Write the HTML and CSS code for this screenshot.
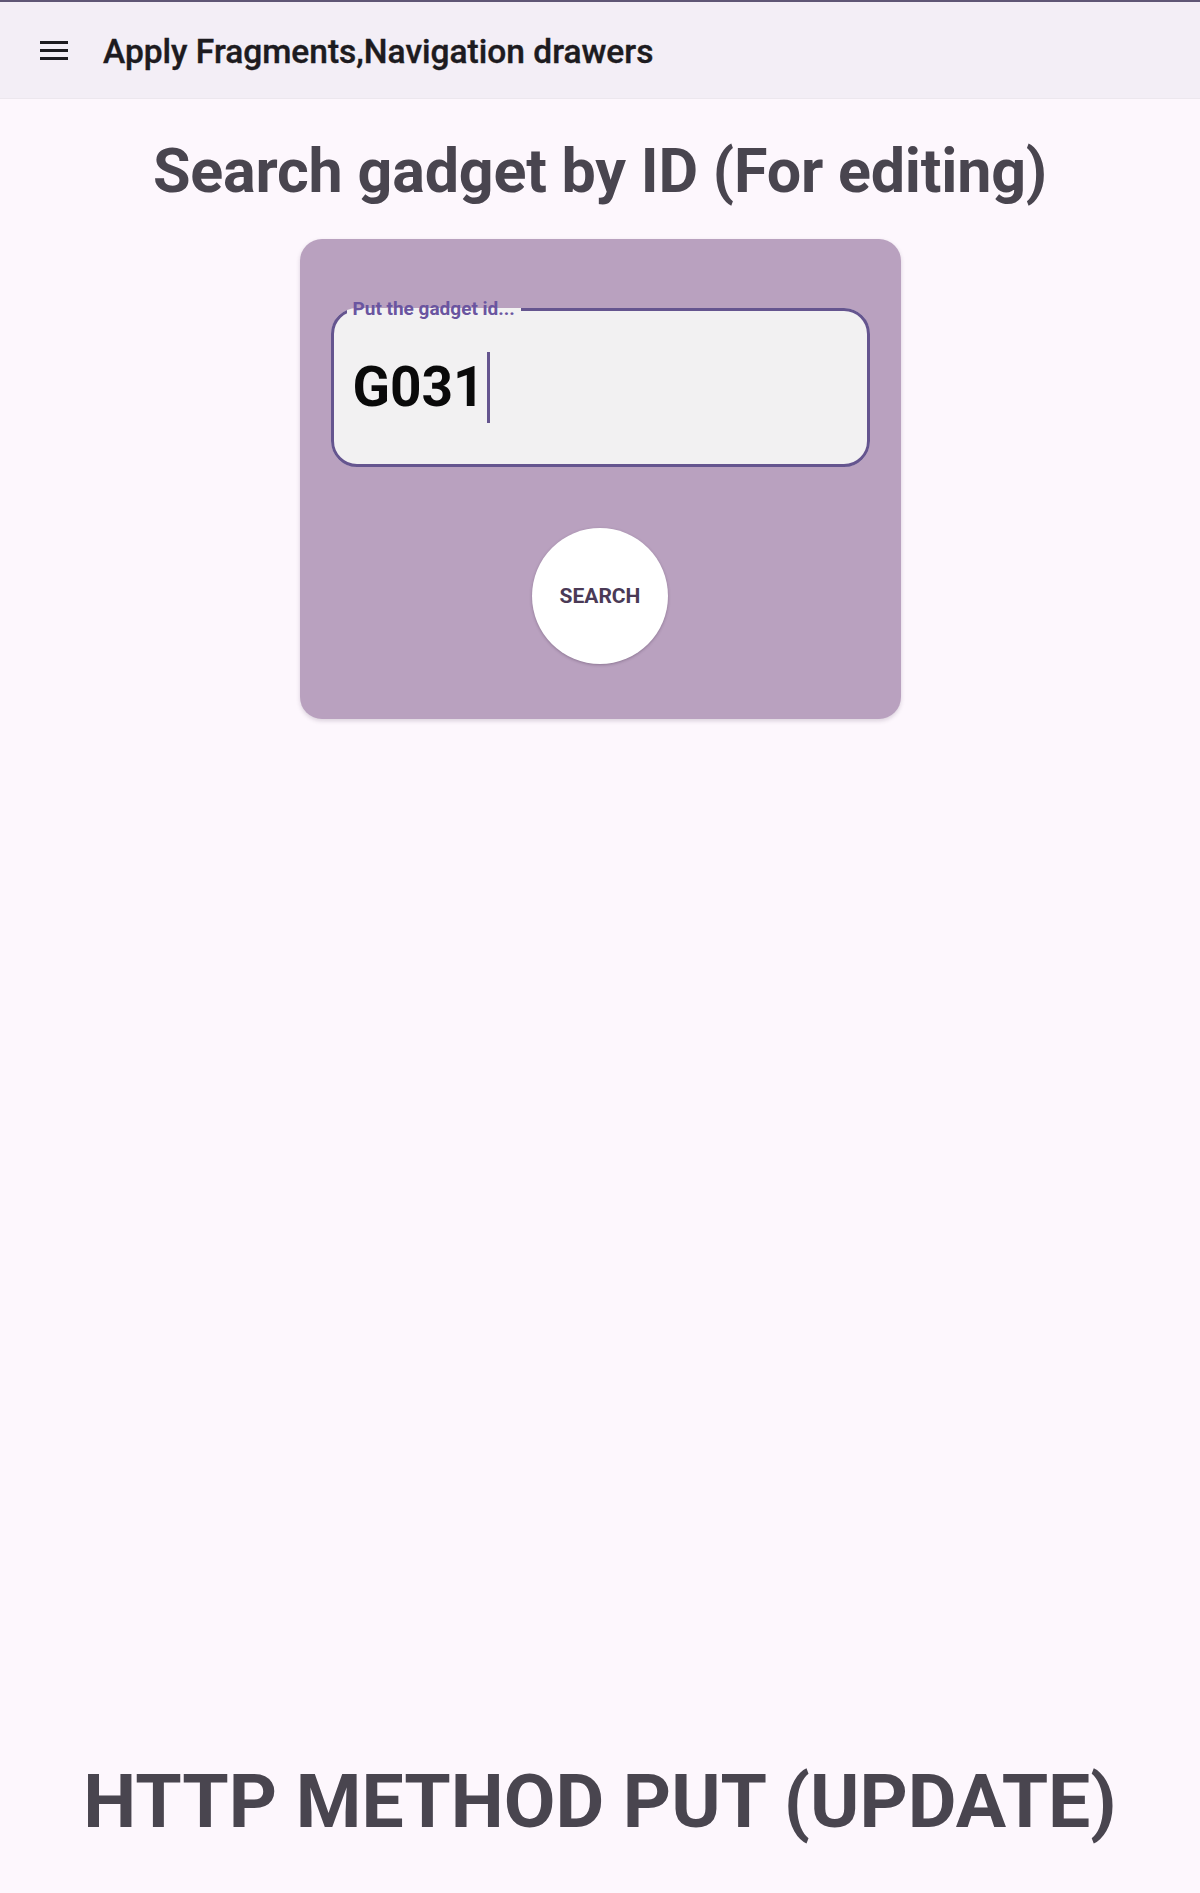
FILE: index.html
```html
<!DOCTYPE html>
<html lang="en">
<head>
<meta charset="utf-8">
<title>Apply Fragments,Navigation drawers</title>
<link rel="stylesheet" href="styles.css">
</head>
<body>
<header class="appbar">
  <span class="menu-icon" aria-label="Menu"><span></span><span></span><span></span></span>
  <h1 class="appbar-title">Apply Fragments,Navigation drawers</h1>
</header>
<main class="content">
  <h2 class="page-title">Search gadget by ID (For editing)</h2>
  <section class="card">
    <fieldset class="field">
      <legend class="field-label">Put the gadget id...</legend>
      <div class="field-value"><span class="value-text">G031</span><span class="caret"></span></div>
    </fieldset>
    <div class="actions">
      <button class="search-btn" type="button">SEARCH</button>
    </div>
  </section>
</main>
<footer class="footer">
  <h2 class="footer-title">HTTP METHOD PUT (UPDATE)</h2>
</footer>
</body>
</html>
```

FILE: styles.css
```css
* { box-sizing: border-box; }
html, body { margin: 0; padding: 0; }
body {
  min-height: 100vh;
  display: flex;
  flex-direction: column;
  background: #fdf7fd;
  font-family: Roboto, "Noto Sans", "Liberation Sans", sans-serif;
  color: #49454f;
}
.appbar {
  display: flex;
  align-items: center;
  height: 99px;
  border-top: 2px solid #5f5675;
  border-bottom: 1px solid #ece7ee;
  background: #f3eef6;
  padding-left: 40px;
}
.menu-icon {
  display: flex;
  flex-direction: column;
  justify-content: space-between;
  width: 28px;
  height: 19px;
  margin-right: 35px;
}
.menu-icon span {
  display: block;
  height: 3px;
  background: #1d1b20;
}
.appbar-title {
  margin: 0;
  padding-top: 4px;
  font-size: 33.5px;
  font-weight: 500;
  line-height: 1.2;
  color: #1d1b20;
  letter-spacing: 0;
  -webkit-text-stroke: 0.4px #1d1b20;
}
.content {
  flex: 1;
  display: flex;
  flex-direction: column;
  align-items: center;
}
.page-title {
  margin: 36px 0 31px;
  font-size: 61px;
  font-weight: 700;
  line-height: 1.2;
  color: #49454f;
  text-align: center;
  letter-spacing: -0.2px;
}
.card {
  width: 601px;
  padding: 60px 31px 55px;
  background: #b9a1bf;
  border-radius: 22px;
  box-shadow: 0 2px 4px rgba(60, 40, 70, 0.18);
}
.field {
  margin: 0;
  padding: 0;
  border: 3px solid #65558f;
  border-radius: 26px;
  background: #f2f1f2;
  min-inline-size: 0;
}
.field-label {
  margin-left: 13px;
  padding: 0 6px;
  font-size: 19px;
  font-weight: 700;
  line-height: 20px;
  color: #6a55a0;
}
.field-value {
  display: flex;
  align-items: center;
  height: 145px;
  padding: 0 0 8px 19px;
}
.value-text {
  font-size: 55px;
  font-weight: 700;
  line-height: 1;
  color: #0a0a0a;
}
.caret {
  display: block;
  width: 3px;
  height: 71px;
  margin-left: 2px;
  background: #65558f;
}
.actions {
  display: flex;
  justify-content: center;
  margin-top: 61px;
}
.search-btn {
  width: 136px;
  height: 136px;
  margin: 0;
  padding: 0;
  border: none;
  border-radius: 50%;
  background: #ffffff;
  box-shadow: 0 1px 3px rgba(60, 40, 70, 0.35);
  font-family: Roboto, "Noto Sans", "Liberation Sans", sans-serif;
  font-size: 21px;
  font-weight: 700;
  color: #4a3a56;
  cursor: pointer;
}
.footer {
  padding-bottom: 47px;
}
.footer-title {
  margin: 0;
  font-size: 75px;
  font-weight: 700;
  line-height: 1.2;
  text-align: center;
  color: #49454f;
}
```
